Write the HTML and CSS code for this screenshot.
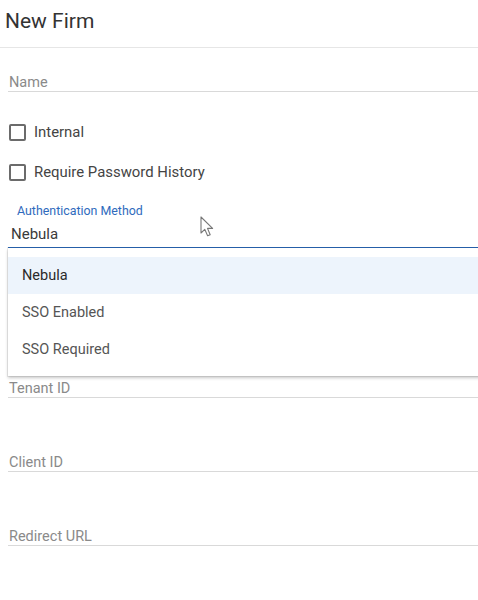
FILE: index.html
```html
<!DOCTYPE html>
<html>
<head>
<meta charset="utf-8">
<link rel="stylesheet" href="styles.css">
</head>
<body>
<div class="page">
  <div class="header">New Firm</div>
  <div class="form">
    <div class="field name-field"><span class="label">Name</span></div>
    <div class="checks">
      <label class="check"><span class="box"></span><span class="check-text">Internal</span></label>
      <label class="check"><span class="box"></span><span class="check-text">Require Password History</span></label>
    </div>
    <div class="select">
      <div class="select-label">Authentication Method</div>
      <div class="select-value">Nebula</div>
      <div class="menu">
        <div class="item selected">Nebula</div>
        <div class="item">SSO Enabled</div>
        <div class="item">SSO Required</div>
      </div>
    </div>
    <div class="field tenant-field"><span class="label">Tenant ID</span></div>
    <div class="field"><span class="label">Client ID</span></div>
    <div class="field"><span class="label">Redirect URL</span></div>
  </div>
  <svg class="cursor" width="16" height="22" viewBox="0 0 16 22">
    <path d="M1 1 L1 17 L4.8 13.4 L7.6 19.8 L10.2 18.7 L7.5 12.4 L12.6 12.4 Z" fill="#fff" stroke="#777" stroke-width="1.1" stroke-linejoin="round"/>
  </svg>
</div>
</body>
</html>
```
FILE: styles.css
```css
html, body {
  margin: 0;
  padding: 0;
  background: #fff;
  overflow: hidden;
}
body {
  font-family: Roboto, "Liberation Sans", Arial, sans-serif;
}
.page {
  position: relative;
  width: 478px;
  height: 600px;
  overflow: hidden;
}
.header {
  height: 38px;
  padding: 9px 0 0 5px;
  font-size: 21px;
  line-height: 24px;
  color: #333;
  border-bottom: 1px solid #e6e6e6;
}
.form {
  padding-left: 8px;
  display: flex;
  flex-direction: column;
}
.field {
  border-bottom: 1px solid #d9d9d9;
  padding-left: 1px;
}
.label {
  display: block;
  font-size: 14.5px;
  line-height: 17px;
  color: #8a8a8a;
}
.name-field {
  margin-top: 27px;
}
.name-field .label {
  line-height: 16px;
}
.checks {
  margin-top: 20px;
  display: flex;
  flex-direction: column;
}
.check {
  height: 40px;
  display: flex;
  align-items: center;
  gap: 8px;
  padding-left: 1px;
}
.box {
  width: 13px;
  height: 13px;
  border: 2px solid #6b6b6b;
  border-radius: 2px;
}
.check-text {
  font-size: 14.9px;
  color: #444;
}
.select {
  position: relative;
  padding-top: 11px;
  border-bottom: 2px solid #2968b8;
}
.select-label {
  padding-left: 9px;
  font-size: 12.4px;
  line-height: 16px;
  color: #2f6bbd;
}
.select-value {
  margin-top: 6px;
  padding-left: 3px;
  padding-bottom: 4px;
  font-size: 15px;
  line-height: 18px;
  color: #3a3a3a;
}
.menu {
  position: absolute;
  left: 0;
  right: -6px;
  top: 100%;
  margin-top: 1px;
  padding: 9px 0 8px;
  background: #fff;
  box-shadow: 0 2px 3px rgba(0,0,0,0.22), 0 0 0 1px rgba(0,0,0,0.07);
  z-index: 2;
}
.item {
  height: 37px;
  line-height: 37px;
  padding-left: 14px;
  font-size: 14.5px;
  color: #555;
}
.item.selected {
  background: #edf4fc;
  color: #2a2a2a;
}
.tenant-field {
  margin-top: 131px;
}
.field + .field {
  margin-top: 56px;
}
.cursor {
  position: absolute;
  left: 200px;
  top: 216px;
}
```
